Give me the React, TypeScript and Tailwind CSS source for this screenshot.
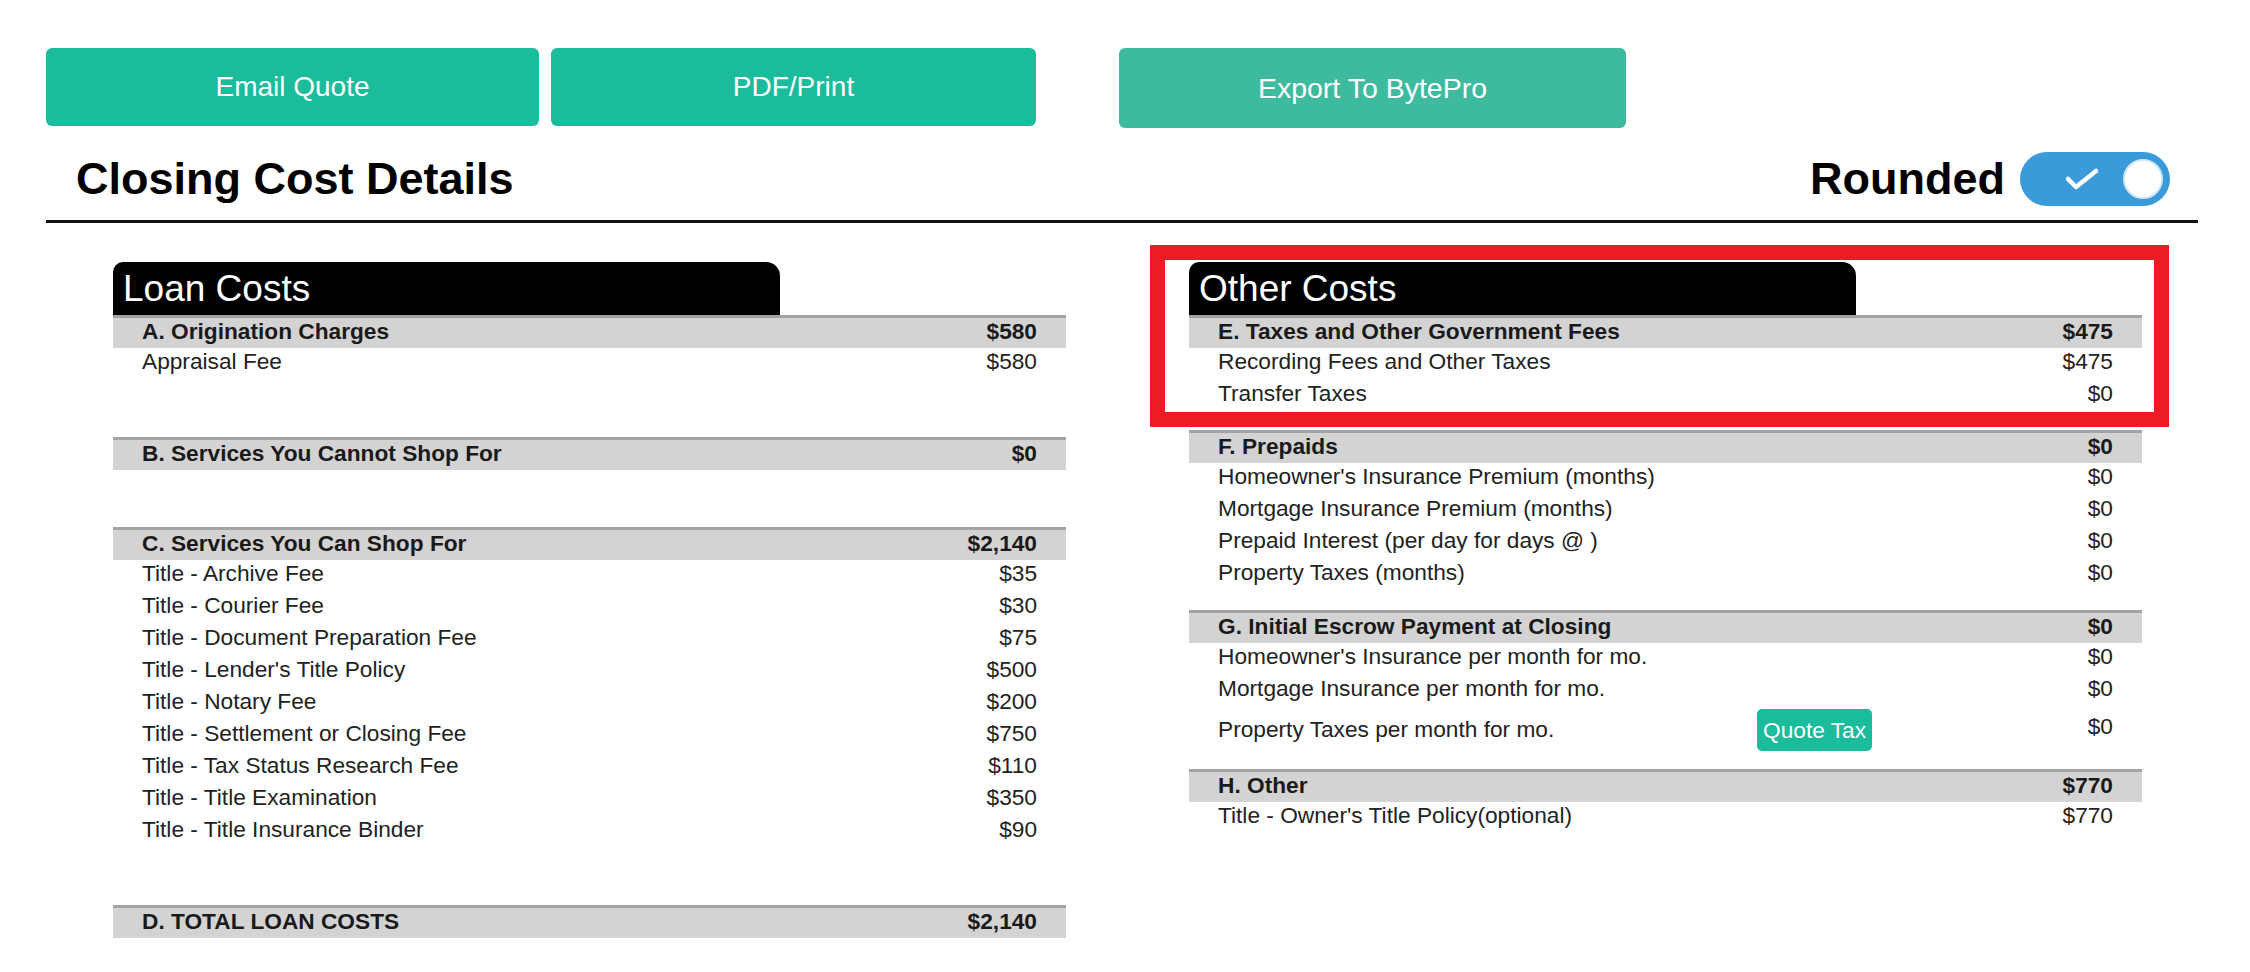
import React, { useState } from 'react';

type Item = { label: string; amount: string };
type Section = { title: string; total: string; items: Item[]; gap: string };

const loanCosts: Section[] = [
  {
    title: 'A. Origination Charges',
    total: '$580',
    items: [{ label: 'Appraisal Fee', amount: '$580' }],
    gap: 'mb-[57px]',
  },
  { title: 'B. Services You Cannot Shop For', total: '$0', items: [], gap: 'mb-[57px]' },
  {
    title: 'C. Services You Can Shop For',
    total: '$2,140',
    items: [
      { label: 'Title - Archive Fee', amount: '$35' },
      { label: 'Title - Courier Fee', amount: '$30' },
      { label: 'Title - Document Preparation Fee', amount: '$75' },
      { label: "Title - Lender's Title Policy", amount: '$500' },
      { label: 'Title - Notary Fee', amount: '$200' },
      { label: 'Title - Settlement or Closing Fee', amount: '$750' },
      { label: 'Title - Tax Status Research Fee', amount: '$110' },
      { label: 'Title - Title Examination', amount: '$350' },
      { label: 'Title - Title Insurance Binder', amount: '$90' },
    ],
    gap: 'mb-[57px]',
  },
  { title: 'D. TOTAL LOAN COSTS', total: '$2,140', items: [], gap: '' },
];

const otherCosts: Section[] = [
  {
    title: 'E. Taxes and Other Government Fees',
    total: '$475',
    items: [
      { label: 'Recording Fees and Other Taxes', amount: '$475' },
      { label: 'Transfer Taxes', amount: '$0' },
    ],
    gap: 'mb-[18px]',
  },
  {
    title: 'F. Prepaids',
    total: '$0',
    items: [
      { label: "Homeowner's Insurance Premium (months)", amount: '$0' },
      { label: 'Mortgage Insurance Premium (months)', amount: '$0' },
      { label: 'Prepaid Interest (per day for days @ )', amount: '$0' },
      { label: 'Property Taxes (months)', amount: '$0' },
    ],
    gap: 'mb-[19px]',
  },
];

function SectionHeader({ title, total }: { title: string; total: string }) {
  return (
    <div className="flex h-[33px] items-center justify-between border-t-[3px] border-[#a3a3a3] bg-[#d3d3d3] px-[29px] pb-[4px] text-[22.7px] font-bold text-[#1a1a1a]">
      <span>{title}</span>
      <span>{total}</span>
    </div>
  );
}

function Row({ label, amount }: Item) {
  return (
    <div className="flex h-[32px] items-center justify-between px-[29px] pb-[5px] text-[22.7px] text-[#222]">
      <span>{label}</span>
      <span>{amount}</span>
    </div>
  );
}

function CostSection({ section }: { section: Section }) {
  return (
    <div className={section.gap}>
      <SectionHeader title={section.title} total={section.total} />
      {section.items.map((item) => (
        <Row key={item.label} {...item} />
      ))}
    </div>
  );
}

function Tab({ children }: { children: React.ReactNode }) {
  return (
    <div className="flex h-[53px] w-[667px] items-center rounded-tl-[10px] rounded-tr-[14px] bg-black pl-[10px] text-[37px] leading-none text-white">
      {children}
    </div>
  );
}

function Toggle({ on, onChange }: { on: boolean; onChange: () => void }) {
  return (
    <button
      onClick={onChange}
      className="relative flex h-[54px] w-[150px] items-center rounded-full bg-[#3b9ad9]"
    >
      <svg className="absolute left-[46px] top-[16px]" width="32" height="22" viewBox="0 0 32 22">
        <polyline
          points="2,11 10,19 30,3"
          fill="none"
          stroke="white"
          strokeWidth="4.5"
          strokeLinecap="round"
          strokeLinejoin="round"
        />
      </svg>
      <span
        className={`absolute top-[7px] h-[40px] w-[40px] rounded-full border-2 border-[#cfe6f7] bg-white ${on ? 'right-[7px]' : 'left-[7px]'}`}
      />
    </button>
  );
}

export default function App() {
  const [rounded, setRounded] = useState(true);

  return (
    <div className="min-h-screen bg-white pl-[46px] pr-[52px] pt-[48px] font-['Liberation_Sans',Arial,sans-serif]">
      <div className="flex text-[28px] text-white">
        <button className="h-[78px] w-[493px] rounded-[6px] bg-[#1abc9c]">Email Quote</button>
        <button className="ml-[12px] h-[78px] w-[485px] rounded-[6px] bg-[#1abc9c]">PDF/Print</button>
        <button className="ml-[83px] h-[80px] w-[507px] rounded-[6px] bg-[#3ebb9e] text-[28.5px]">Export To BytePro</button>
      </div>

      <div className="flex h-[92px] items-center justify-between pl-[30px] pr-[28px] pt-[10px]">
        <h1 className="text-[45px] font-bold text-black">Closing Cost Details</h1>
        <div className="flex items-center gap-[15px]">
          <span className="text-[45px] font-bold text-black">Rounded</span>
          <Toggle on={rounded} onChange={() => setRounded(!rounded)} />
        </div>
      </div>
      <div className="h-[3px] bg-[#111]" />

      <div className="mt-[39px] flex gap-[123px] pl-[67px]">
        <div className="w-[953px]">
          <Tab>Loan Costs</Tab>
          {loanCosts.map((s) => (
            <CostSection key={s.title} section={s} />
          ))}
        </div>

        <div className="relative w-[953px]">
          <Tab>Other Costs</Tab>
          {otherCosts.map((s) => (
            <CostSection key={s.title} section={s} />
          ))}

          <div className="mb-[18px]">
            <SectionHeader title="G. Initial Escrow Payment at Closing" total="$0" />
            <Row label="Homeowner's Insurance per month for mo." amount="$0" />
            <Row label="Mortgage Insurance per month for mo." amount="$0" />
            <div className="flex h-[44px] px-[29px] text-[22.7px] text-[#222]">
              <span className="w-[539px] self-center">Property Taxes per month for mo.</span>
              <button className="mt-[2px] h-[42px] rounded-[5px] bg-[#1abc9c] px-[6px] text-[22.7px] text-white">
                Quote Tax
              </button>
              <span className="ml-auto pt-[2px]">$0</span>
            </div>
          </div>

          <div>
            <SectionHeader title="H. Other" total="$770" />
            <Row label="Title - Owner's Title Policy(optional)" amount="$770" />
          </div>

          <div className="pointer-events-none absolute left-[-39px] top-[-17px] h-[182px] w-[1019px] border-[15px] border-[#ed1c24]" />
        </div>
      </div>
    </div>
  );
}
